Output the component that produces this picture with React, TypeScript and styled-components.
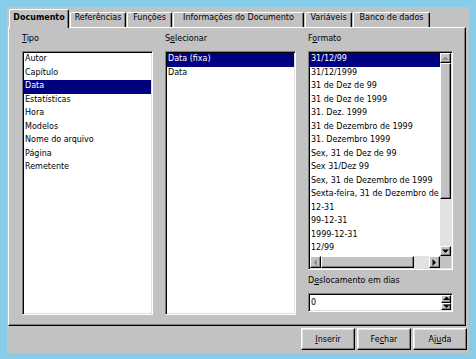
import React from 'react';
import styled, { createGlobalStyle, css } from 'styled-components';

const face = '#c2c2c2';

const GlobalStyle = createGlobalStyle`
  html, body {
    margin: 0;
    padding: 0;
    background: #87cdea;
  }
  body {
    font-family: 'DejaVu Sans', 'Liberation Sans', sans-serif;
    font-size: 8px;
    color: #000;
  }
`;

const raised = css`
  border-style: solid;
  border-width: 1px;
  border-color: #fff #000 #000 #fff;
  box-shadow: inset -1px -1px 0 #808080;
`;

const sunken = css`
  border-style: solid;
  border-width: 1px;
  border-color: #808080 #fff #fff #808080;
  box-shadow: inset 1px 1px 0 #000, inset -1px -1px 0 #dfdfdf;
  padding: 1px;
  background: #fff;
`;

const Screen = styled.div`
  width: 476px;
  height: 359px;
  padding: 7px;
  box-sizing: border-box;
`;

const Dialog = styled.div`
  width: 462px;
  height: 346px;
  background: ${face};
  display: flex;
  flex-direction: column;
`;

const TabBar = styled.div`
  display: flex;
  align-items: flex-end;
  gap: 1px;
  height: 20px;
  padding-left: 2px;
`;

const Tab = styled.div<{ $active?: boolean; $w: number }>`
  width: ${(p) => p.$w}px;
  box-sizing: border-box;
  text-align: center;
  white-space: nowrap;
  background: ${face};
  border-style: solid;
  border-width: 1px 1px 0 1px;
  border-color: #fff #000 #000 #fff;
  border-radius: 2px 2px 0 0;
  box-shadow: inset -1px 0 0 #808080;
  ${(p) =>
    p.$active
      ? css`
          height: 19px;
          margin-bottom: -1px;
          padding-top: 2px;
          line-height: 12px;
          font-weight: bold;
          position: relative;
          z-index: 1;
        `
      : css`
          height: 15px;
          line-height: 10px;
        `}
`;

const Panel = styled.div`
  margin: 0 3px 0 1px;
  height: 299px;
  box-sizing: border-box;
  ${raised};
  padding: 5px 11px 10px 13px;
  display: grid;
  grid-template-columns: 131px 131px 145px;
  column-gap: 12px;
`;

const Column = styled.div`
  display: flex;
  flex-direction: column;
  min-height: 0;
`;

const Label = styled.div<{ $gapTop?: number }>`
  line-height: 12px;
  margin-top: ${(p) => p.$gapTop ?? 0}px;
  margin-bottom: 6px;
  white-space: nowrap;
`;

const ListBox = styled.div`
  ${sunken};
  flex: 1;
  overflow: hidden;
`;

const Item = styled.div<{ $selected?: boolean }>`
  height: 13.5px;
  line-height: 12px;
  padding-left: 1px;
  white-space: nowrap;
  overflow: hidden;
  ${(p) =>
    p.$selected &&
    css`
      background: #000080;
      color: #fff;
    `}
`;

const FormatBox = styled.div`
  ${sunken};
  height: 219px;
  box-sizing: border-box;
  display: grid;
  grid-template-columns: 130px 11px;
  grid-template-rows: 203px 12px;
`;

const Viewport = styled.div`
  overflow: hidden;
`;

const VScroll = styled.div`
  display: flex;
  flex-direction: column;
  background: #e2e2e2;
`;

const HScroll = styled.div`
  display: flex;
  background: #e2e2e2;
`;

const ArrowButton = styled.div<{ $len: number }>`
  ${raised};
  box-sizing: border-box;
  background: ${face};
  flex: 0 0 ${(p) => p.$len}px;
  display: flex;
  align-items: center;
  justify-content: center;
`;

const Thumb = styled.div<{ $len: number }>`
  ${raised};
  box-sizing: border-box;
  background: ${face};
  flex: 0 0 ${(p) => p.$len}px;
`;

const Trough = styled.div`
  flex: 1;
`;

const Corner = styled.div`
  background: ${face};
`;

const SpinBox = styled.div`
  ${sunken};
  height: 19px;
  box-sizing: border-box;
  display: grid;
  grid-template-columns: 1fr 10px;
`;

const SpinValue = styled.div`
  line-height: 15px;
  padding-left: 1px;
`;

const SpinButtons = styled.div`
  display: flex;
  flex-direction: column;
`;

const ButtonRow = styled.div`
  display: flex;
  justify-content: flex-end;
  gap: 2px;
  height: 22px;
  margin: 2px 2px 3px 0;
`;

const PushButton = styled.button`
  width: 54px;
  height: 22px;
  padding: 0;
  font: inherit;
  color: #000;
  background: ${face};
  border-style: solid;
  border-width: 1px;
  border-color: #fff #000 #000 #fff;
  box-shadow: inset -1px -1px 0 #808080, inset 1px 1px 0 #e4e4e4;
`;

type Dir = 'up' | 'down' | 'left' | 'right';

const Arrow = ({ dir, disabled }: { dir: Dir; disabled?: boolean }) => {
  const pts: Record<Dir, string> = {
    up: '0,4 3.5,0.5 7,4',
    down: '0,0.5 7,0.5 3.5,4',
    left: '4,0 0.5,3.5 4,7',
    right: '0.5,0 4,3.5 0.5,7',
  };
  const horiz = dir === 'left' || dir === 'right';
  return (
    <svg width={horiz ? 5 : 7} height={horiz ? 7 : 5} viewBox={horiz ? '0 0 5 7' : '0 0 7 5'}>
      <polygon points={pts[dir]} fill={disabled ? '#8c8c8c' : '#000'} />
    </svg>
  );
};

const tabs = [
  { label: 'Documento', w: 60, active: true },
  { label: 'Referências', w: 56 },
  { label: 'Funções', w: 45 },
  { label: 'Informações do Documento', w: 131 },
  { label: 'Variáveis', w: 47 },
  { label: 'Banco de dados', w: 77 },
];

const tipos = ['Autor', 'Capítulo', 'Data', 'Estatísticas', 'Hora', 'Modelos', 'Nome do arquivo', 'Página', 'Remetente'];
const selecionar = ['Data (fixa)', 'Data'];
const formatos = [
  '31/12/99',
  '31/12/1999',
  '31 de Dez de 99',
  '31 de Dez de 1999',
  '31. Dez. 1999',
  '31 de Dezembro de 1999',
  '31. Dezembro 1999',
  'Sex, 31 de Dez de 99',
  'Sex 31/Dez 99',
  'Sex, 31 de Dezembro de 1999',
  'Sexta-feira, 31 de Dezembro de',
  '12-31',
  '99-12-31',
  '1999-12-31',
  '12/99',
];

export default function App() {
  return (
    <Screen>
      <GlobalStyle />
      <Dialog>
        <TabBar>
          {tabs.map((t) => (
            <Tab key={t.label} $w={t.w} $active={t.active}>
              {t.label}
            </Tab>
          ))}
        </TabBar>
        <Panel>
          <Column>
            <Label>
              <u>T</u>ipo
            </Label>
            <ListBox>
              {tipos.map((t) => (
                <Item key={t} $selected={t === 'Data'}>
                  {t}
                </Item>
              ))}
            </ListBox>
          </Column>
          <Column>
            <Label>
              S<u>e</u>lecionar
            </Label>
            <ListBox>
              {selecionar.map((s, i) => (
                <Item key={s} $selected={i === 0}>
                  {s}
                </Item>
              ))}
            </ListBox>
          </Column>
          <Column>
            <Label>
              F<u>o</u>rmato
            </Label>
            <FormatBox>
              <Viewport>
                {formatos.map((f, i) => (
                  <Item key={f} $selected={i === 0}>
                    {f}
                  </Item>
                ))}
              </Viewport>
              <VScroll>
                <ArrowButton $len={10}>
                  <Arrow dir="up" disabled />
                </ArrowButton>
                <Thumb $len={136} />
                <Trough />
                <ArrowButton $len={10}>
                  <Arrow dir="down" />
                </ArrowButton>
              </VScroll>
              <HScroll>
                <ArrowButton $len={11}>
                  <Arrow dir="left" disabled />
                </ArrowButton>
                <Thumb $len={93} />
                <Trough />
                <ArrowButton $len={11}>
                  <Arrow dir="right" />
                </ArrowButton>
              </HScroll>
              <Corner />
            </FormatBox>
            <Label $gapTop={5}>
              D<u>e</u>slocamento em dias
            </Label>
            <SpinBox>
              <SpinValue>0</SpinValue>
              <SpinButtons>
                <ArrowButton $len={7.5}>
                  <Arrow dir="up" />
                </ArrowButton>
                <ArrowButton $len={7.5}>
                  <Arrow dir="down" />
                </ArrowButton>
              </SpinButtons>
            </SpinBox>
          </Column>
        </Panel>
        <ButtonRow>
          <PushButton>
            <u>I</u>nserir
          </PushButton>
          <PushButton>
            Fe<u>c</u>har
          </PushButton>
          <PushButton>
            Aj<u>u</u>da
          </PushButton>
        </ButtonRow>
      </Dialog>
    </Screen>
  );
}
